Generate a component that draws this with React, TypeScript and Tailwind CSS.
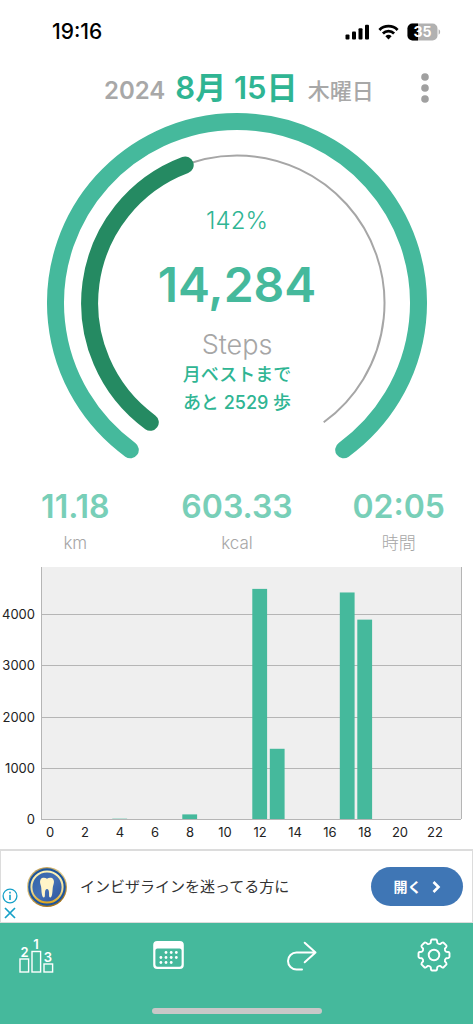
import React from "react";

const sans = "font-['Inter','Noto_Sans_CJK_JP',sans-serif]";

function StatusBar() {
  return (
    <div className="flex h-16 items-center justify-between pr-[33px] pl-[52px]">
      <span className="text-[21px] leading-6 font-medium text-black">19:16</span>
      <div className="flex items-center gap-2">
        <svg width="25" height="16" viewBox="0 0 25 16" aria-hidden="true">
          <rect x="0.5" y="10.5" width="4" height="5" rx="1" />
          <rect x="7" y="7.5" width="4" height="8" rx="1" />
          <rect x="13.5" y="4.3" width="4" height="11.2" rx="1" />
          <rect x="20" y="0.7" width="4" height="14.8" rx="1" />
        </svg>
        <svg width="21" height="16" viewBox="0 0 21 16" aria-hidden="true">
          <g fill="none" stroke="#000" strokeWidth="2.8">
            <path d="M1.4 5.9a13 13 0 0 1 18.2 0" />
            <path d="M4.9 9.5a8 8 0 0 1 11.2 0" />
          </g>
          <path d="M7.4 12.2a4.6 4.6 0 0 1 6.2 0l-3.1 3.2z" />
        </svg>
        <svg width="34" height="18" viewBox="0 0 34 18" role="img" aria-label="35%">
          <defs>
            <clipPath id="battery">
              <rect x="0.5" y="0.5" width="30" height="17" rx="5" />
            </clipPath>
          </defs>
          <g clipPath="url(#battery)">
            <rect width="31" height="18" fill="#b1b1b1" />
            <rect width="11" height="18" fill="#000" />
          </g>
          <path d="M31.6 6.3q1.6.8 1.6 2.7t-1.6 2.7z" fill="#b1b1b1" />
          <text x="15.5" y="14" textAnchor="middle" fontSize="14" fontWeight="700" fill="#fff">
            35
          </text>
        </svg>
      </div>
    </div>
  );
}

function Header() {
  return (
    <header className="flex h-[47px] items-center justify-between pr-10 pl-[104px]">
      <h1 className="flex items-baseline gap-2.5 font-semibold whitespace-nowrap text-[#a8a8a8]">
        <span className="text-2xl">2024</span>
        <span className="text-[31px] leading-10 text-[#2fb593]">8月 15日</span>
        <span className="text-[22px] font-medium">木曜日</span>
      </h1>
      <button type="button" aria-label="メニュー" className="p-0">
        <svg width="18" height="32" viewBox="0 0 18 32" fill="#a0a0a0">
          <circle cx="9" cy="5" r="3.8" />
          <circle cx="9" cy="16" r="3.8" />
          <circle cx="9" cy="27" r="3.8" />
        </svg>
      </button>
    </header>
  );
}

function Gauge() {
  return (
    <section className="grid justify-items-center *:col-start-1 *:row-start-1">
      <svg width="384" height="350" viewBox="0 0 384 350" fill="none" aria-hidden="true">
        <path d="M85.3 338.8A181.5 181.5 0 1 1 298.7 338.8" stroke="#45b99c" strokeWidth="17" strokeLinecap="round" />
        <path d="M105.3 311.3A147.5 147.5 0 1 1 278.7 311.3" stroke="#a6a6a6" strokeWidth="2" />
        <path d="M105.3 311.3A147.5 147.5 0 0 1 140.2 54" stroke="#258a62" strokeWidth="17" strokeLinecap="round" />
      </svg>
      <div className="flex flex-col items-center pt-24 text-[#2fb593]">
        <p className="text-2xl leading-7 font-light">142%</p>
        <p className="pt-5 text-5xl leading-[60px] font-semibold text-[#45b99c]">14,284</p>
        <p className="pt-3.5 text-[27px] leading-8 font-light text-[#a6a6a6]">Steps</p>
        <p className="text-lg leading-7 font-medium">月ベストまで</p>
        <p className="text-lg leading-7 font-medium">あと 2529 歩</p>
      </div>
    </section>
  );
}

function Stat({ value, unit }: { value: string; unit: string }) {
  return (
    <div className="flex flex-col items-center">
      <dd className="text-[32px] leading-10 font-semibold text-[#78cfb8]">{value}</dd>
      <dt className="order-last pt-0.5 text-[17px] leading-7 font-light text-[#a6a6a6]">{unit}</dt>
    </div>
  );
}

const steps: [number, number][] = [
  [4, 6],
  [8, 90],
  [12, 4490],
  [13, 1370],
  [17, 4420],
  [18, 3890],
];
const baseline = 252;
const perStep = 51.25 / 1000;

function Chart() {
  return (
    <svg viewBox="0 0 474 282" className="block w-full" role="img" aria-label="時間別の歩数">
      <rect x="41" y="0" width="420" height={baseline} fill="#efefef" />
      {[0, 1000, 2000, 3000, 4000].map((v) => {
        const y = Math.round(baseline - v * perStep) + 0.5;
        return (
          <g key={v}>
            <path d={`M41 ${y}H461`} stroke="#b5b5b5" />
            <text x="35" y={y + 4} textAnchor="end" fontSize="13" fill="#222">
              {v}
            </text>
          </g>
        );
      })}
      <path d={`M41.5 0V${baseline}M461.5 0V${baseline}`} stroke="#b5b5b5" />
      {steps.map(([hour, n]) => (
        <rect key={hour} x={42.3 + hour * 17.5} y={baseline - n * perStep} width="14.8" height={n * perStep} fill="#45b99c" />
      ))}
      {Array.from({ length: 12 }, (_, i) => i * 2).map((h) => (
        <text key={h} x={50 + h * 17.5} y="270" textAnchor="middle" fontSize="13" fill="#222">
          {h}
        </text>
      ))}
    </svg>
  );
}

function Ad() {
  return (
    <aside className="mr-px flex h-[74px] items-center border border-t-2 border-[#dcdcdc]">
      <div className="flex w-[18px] flex-col items-center gap-0.5 self-end pb-0.5 text-[#16a0c8]">
        <button type="button" aria-label="広告について">
          <svg width="16" height="16" viewBox="0 0 16 16" fill="none" stroke="currentColor" strokeWidth="1.3">
            <circle cx="8" cy="8" r="6.9" />
            <path d="M8 6.7V12M8 3.7v1.8" strokeWidth="1.6" />
          </svg>
        </button>
        <button type="button" aria-label="広告を閉じる">
          <svg width="16" height="14" viewBox="0 0 16 14" fill="none" stroke="currentColor" strokeWidth="1.7">
            <path d="M3 2l10 10M13 2L3 12" />
          </svg>
        </button>
      </div>
      <svg className="ml-[7px] shrink-0" width="42" height="42" viewBox="0 0 42 42" aria-hidden="true">
        <defs>
          <linearGradient id="gold" x1="0" y1="0" x2="0.4" y2="1">
            <stop offset="0" stopColor="#b08a3e" />
            <stop offset="0.45" stopColor="#e6d08c" />
            <stop offset="1" stopColor="#a87720" />
          </linearGradient>
          <linearGradient id="ring" x1="0" y1="0" x2="0" y2="1">
            <stop offset="0" stopColor="#fdf3b8" />
            <stop offset="0.6" stopColor="#efe0a0" />
            <stop offset="1" stopColor="#e0a820" />
          </linearGradient>
          <linearGradient id="disc" x1="0" y1="0" x2="1" y2="1">
            <stop offset="0" stopColor="#2f62a8" />
            <stop offset="0.5" stopColor="#4470b5" />
            <stop offset="1" stopColor="#2b539c" />
          </linearGradient>
        </defs>
        <circle cx="21" cy="21" r="20" fill="url(#gold)" />
        <circle cx="21" cy="21" r="18.8" fill="#1d559c" />
        <circle cx="21" cy="21" r="15.6" fill="url(#disc)" stroke="url(#ring)" strokeWidth="2" />
        <path
          d="M21 12.7c-1.8-1.2-5-1.4-6.3.6-1.4 2.2-.3 4.5.3 7 .5 2.3.3 5 .9 8 .3 1.7.9 3.2 1.9 3.2 1.5 0 1-3 1.2-5 .1-2.2.7-3.5 2-3.5s1.900 1.300 2 3.500c.2 2-.3 5 1.200 5 1 0 1.600-1.500 1.900-3.200.6-3 .4-5.700.9-8 .6-2.500 1.700-4.800.3-7-1.300-2-4.500-1.800-6.300-.6z"
          fill="#fff4c8"
        />
      </svg>
      <p className="ml-3 flex-1 text-[15px] leading-6 whitespace-nowrap text-[#333]">インビザラインを迷ってる方に</p>
      <button
        type="button"
        className="mr-[9px] flex h-[39px] w-[92px] items-center justify-center gap-2.5 rounded-full bg-[#3f76b5] text-sm font-bold text-white"
      >
        開く
        <svg width="9" height="14" viewBox="0 0 9 14" fill="none" stroke="currentColor" strokeWidth="2.6">
          <path d="M1.5 2l5 5-5 5" />
        </svg>
      </button>
    </aside>
  );
}

// Outline of an eight-toothed cog centred on the origin.
const cog =
  Array.from({ length: 8 }, (_, i) => {
    const at = (r: number, deg: number) => {
      const a = ((i * 45 + deg - 90) * Math.PI) / 180;
      return `${(r * Math.cos(a)).toFixed(2)} ${(r * Math.sin(a)).toFixed(2)}`;
    };
    return `${i ? "L" : "M"}${at(12.6, -15)}L${at(14.6, -12)}Q${at(15.8, -10)} ${at(15.6, -7)}L${at(15.6, 7)}Q${at(15.8, 10)} ${at(14.6, 12)}L${at(12.6, 15)}Q${at(11.4, 22.5)} ${at(12.6, 30)}`;
  }).join("") + "Z";

const calendarDots = [
  [15, 15.5],
  [20.2, 15.5],
  [25.3, 15.5],
  [9.9, 20.5],
  [15, 20.5],
  [20.2, 20.5],
  [25.3, 20.5],
  [9.9, 25.5],
  [15, 25.5],
  [20.2, 25.5],
];

function NavBar() {
  const item = "grid size-9 place-items-center";
  return (
    <nav className="mr-px flex h-[101px] flex-col justify-between bg-[#45b99c] pb-2.5">
      <div className="flex justify-between pt-[14px] pr-[21px] pl-[18px] text-white">
        <button type="button" aria-label="ランキング" className={item}>
          <svg width="36" height="36" viewBox="0 0 36 36" fill="none" stroke="currentColor" strokeWidth="1.4">
            <rect x="2" y="22" width="8.6" height="13" />
            <rect x="14" y="14.5" width="8.6" height="20.5" />
            <rect x="26" y="27" width="8.6" height="8" />
            <g fill="currentColor" stroke="none" fontSize="13" fontWeight="600" textAnchor="middle">
              <text x="6.5" y="19.5">2</text>
              <text x="18" y="12">1</text>
              <text x="30" y="24.5">3</text>
            </g>
          </svg>
        </button>
        <button type="button" aria-label="カレンダー" className={item}>
          <svg width="36" height="36" viewBox="0 0 36 36" fill="currentColor">
            <path
              fillRule="evenodd"
              d="M6.2 4h22.6a4 4 0 0 1 4 4v20a4 4 0 0 1-4 4H6.2a4 4 0 0 1-4-4V8a4 4 0 0 1 4-4zM6.400 11.400a2 2 0 0 0-2 2v14.200a2.200 2.200 0 0 0 2.200 2.200h21.800a2.200 2.200 0 0 0 2.200-2.200V13.400a2 2 0 0 0-2-2z"
            />
            {calendarDots.map(([x, y]) => (
              <circle key={`${x}-${y}`} cx={x} cy={y} r="1.4" />
            ))}
          </svg>
        </button>
        <button type="button" aria-label="共有" className={item}>
          <svg width="36" height="36" viewBox="0 0 36 36" fill="none" stroke="currentColor" strokeWidth="2" strokeLinecap="round" strokeLinejoin="round">
            <path d="M21.7 5.7l10.8 9.8-10.8 9.8M32.5 15.5H13.5a8.5 8.5 0 0 0 0 17H19" />
          </svg>
        </button>
        <button type="button" aria-label="設定" className={item}>
          <svg width="36" height="36" viewBox="-18 -18 36 36" fill="none" stroke="currentColor" strokeWidth="1.9" strokeLinejoin="round">
            <path d={cog} />
            <circle r="5.3" />
          </svg>
        </button>
      </div>
      <div className="h-1.5 w-[170px] self-center rounded-full bg-[#c8c8c8]" />
    </nav>
  );
}

export default function App() {
  return (
    <div className={`${sans} min-h-screen bg-white`} lang="ja">
      <StatusBar />
      <Header />
      <main>
        <Gauge />
        <dl className="grid grid-cols-[150fr_172fr_150fr] pt-[26px] pb-2.5">
          <Stat value="11.18" unit="km" />
          <Stat value="603.33" unit="kcal" />
          <Stat value="02:05" unit="時間" />
        </dl>
        <Chart />
      </main>
      <Ad />
      <NavBar />
    </div>
  );
}
